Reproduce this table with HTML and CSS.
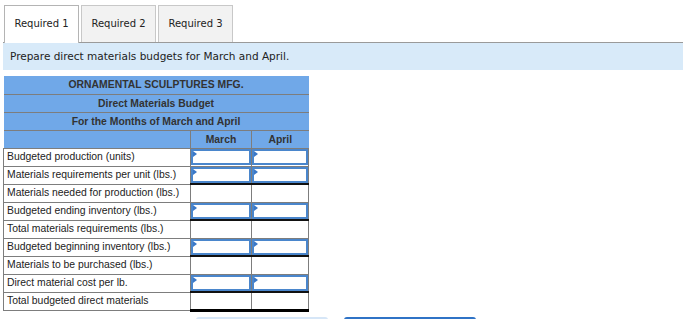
FILE: index.html
```html
<!DOCTYPE html>
<html>
<head>
    <title>Direct Materials Budget</title>
    <link rel="stylesheet" href="styles.css">
</head>
<body>
    <div class="tabs">
        <div class="tab active">Required 1</div>
        <div class="tab">Required 2</div>
        <div class="tab">Required 3</div>
    </div>

    <div class="prompt">Prepare direct materials budgets for March and April.</div>

    <table class="budget">
        <colgroup>
            <col class="col-label">
            <col class="col-march">
            <col class="col-april">
        </colgroup>
        <tr class="title"><th colspan="3">ORNAMENTAL SCULPTURES MFG.</th></tr>
        <tr class="title"><th colspan="3">Direct Materials Budget</th></tr>
        <tr class="title"><th colspan="3">For the Months of March and April</th></tr>
        <tr class="months">
            <th class="blank"></th>
            <th class="month">March</th>
            <th class="month">April</th>
        </tr>
        <tr>
            <td class="label">Budgeted production (units)</td>
            <td class="entry"><div class="box"></div></td>
            <td class="entry"><div class="box"></div></td>
        </tr>
        <tr>
            <td class="label">Materials requirements per unit (lbs.)</td>
            <td class="entry"><div class="box"></div></td>
            <td class="entry"><div class="box"></div></td>
        </tr>
        <tr class="calc">
            <td class="label">Materials needed for production (lbs.)</td>
            <td></td>
            <td></td>
        </tr>
        <tr>
            <td class="label">Budgeted ending inventory (lbs.)</td>
            <td class="entry"><div class="box"></div></td>
            <td class="entry"><div class="box"></div></td>
        </tr>
        <tr class="calc">
            <td class="label">Total materials requirements (lbs.)</td>
            <td></td>
            <td></td>
        </tr>
        <tr>
            <td class="label">Budgeted beginning inventory (lbs.)</td>
            <td class="entry"><div class="box"></div></td>
            <td class="entry"><div class="box"></div></td>
        </tr>
        <tr class="calc">
            <td class="label">Materials to be purchased (lbs.)</td>
            <td></td>
            <td></td>
        </tr>
        <tr>
            <td class="label">Direct material cost per lb.</td>
            <td class="entry"><div class="box"></div></td>
            <td class="entry"><div class="box"></div></td>
        </tr>
        <tr class="calc total">
            <td class="label">Total budgeted direct materials</td>
            <td></td>
            <td></td>
        </tr>
    </table>

    <div class="nav">
        <button class="nav-prev"></button>
        <button class="nav-next"></button>
    </div>
</body>
</html>
```

FILE: styles.css
```css
body {
    margin: 0;
    padding: 5px 4px 0 3px;
    background-color: #fff;
    font-family: "Liberation Sans", Arial, sans-serif;
    color: #222;
}

.tabs {
    display: flex;
    gap: 2px;
    padding-left: 1px;
    border-bottom: 1px solid #9a9a9a;
}

.tab {
    width: 73px;
    height: 36px;
    line-height: 36px;
    text-align: center;
    font-family: "DejaVu Sans", Verdana, sans-serif;
    font-size: 10px;
    color: #222;
    background-color: #f2f2f2;
    border: 1px solid #c8c8c8;
    border-bottom: none;
}

.tab.active {
    background-color: #fff;
    border-color: #b4b4b4;
    margin-bottom: -1px;
    height: 37px;
}

.prompt {
    height: 27px;
    line-height: 27px;
    padding-left: 7px;
    background-color: #d8eaf9;
    font-family: "DejaVu Sans", Verdana, sans-serif;
    font-size: 10.5px;
    color: #222;
}

.budget {
    margin-top: 6px;
    width: 305px;
    table-layout: fixed;
    border-collapse: collapse;
    font-size: 10.4px;
}

.col-label { width: 187px; }
.col-march { width: 61px; }
.col-april { width: 57px; }

.budget th {
    height: 17px;
    padding: 0;
    background-color: #70a8e8;
    color: #333;
    font-weight: bold;
    text-align: center;
    border-bottom: 1px solid #7d7d7d;
}

.budget .month {
    border-left: 1px solid #7d7d7d;
}

.budget tr {
    height: 18px;
}

.budget td {
    height: 16px;
    padding: 0;
    border: 1px solid #7d7d7d;
    line-height: 16px;
}

.budget td.label {
    padding-left: 3px;
    color: #222;
    white-space: nowrap;
    overflow: hidden;
}

.budget .calc td:not(.label) {
    border-top: 2px solid #111;
}

.budget .total td:not(.label) {
    border-bottom: 3px solid #000;
}

.box {
    position: relative;
    height: 12px;
    border: 2px solid #4a86cc;
}

.box::before {
    content: "";
    position: absolute;
    top: 0;
    left: 0;
    border-top: 3px solid transparent;
    border-bottom: 3px solid transparent;
    border-left: 4px solid #3a78c8;
}

.nav {
    display: flex;
    gap: 16px;
    padding-left: 193px;
    margin-top: 5px;
}

.nav button {
    width: 132px;
    height: 30px;
    border: none;
    border-radius: 3px;
    padding: 0;
}

.nav-prev {
    background-color: #fff;
    border-top: 2px solid #d6e6f7 !important;
}

.nav-next {
    background-color: #fff;
    border-top: 2px solid #2f73c6 !important;
}
```
